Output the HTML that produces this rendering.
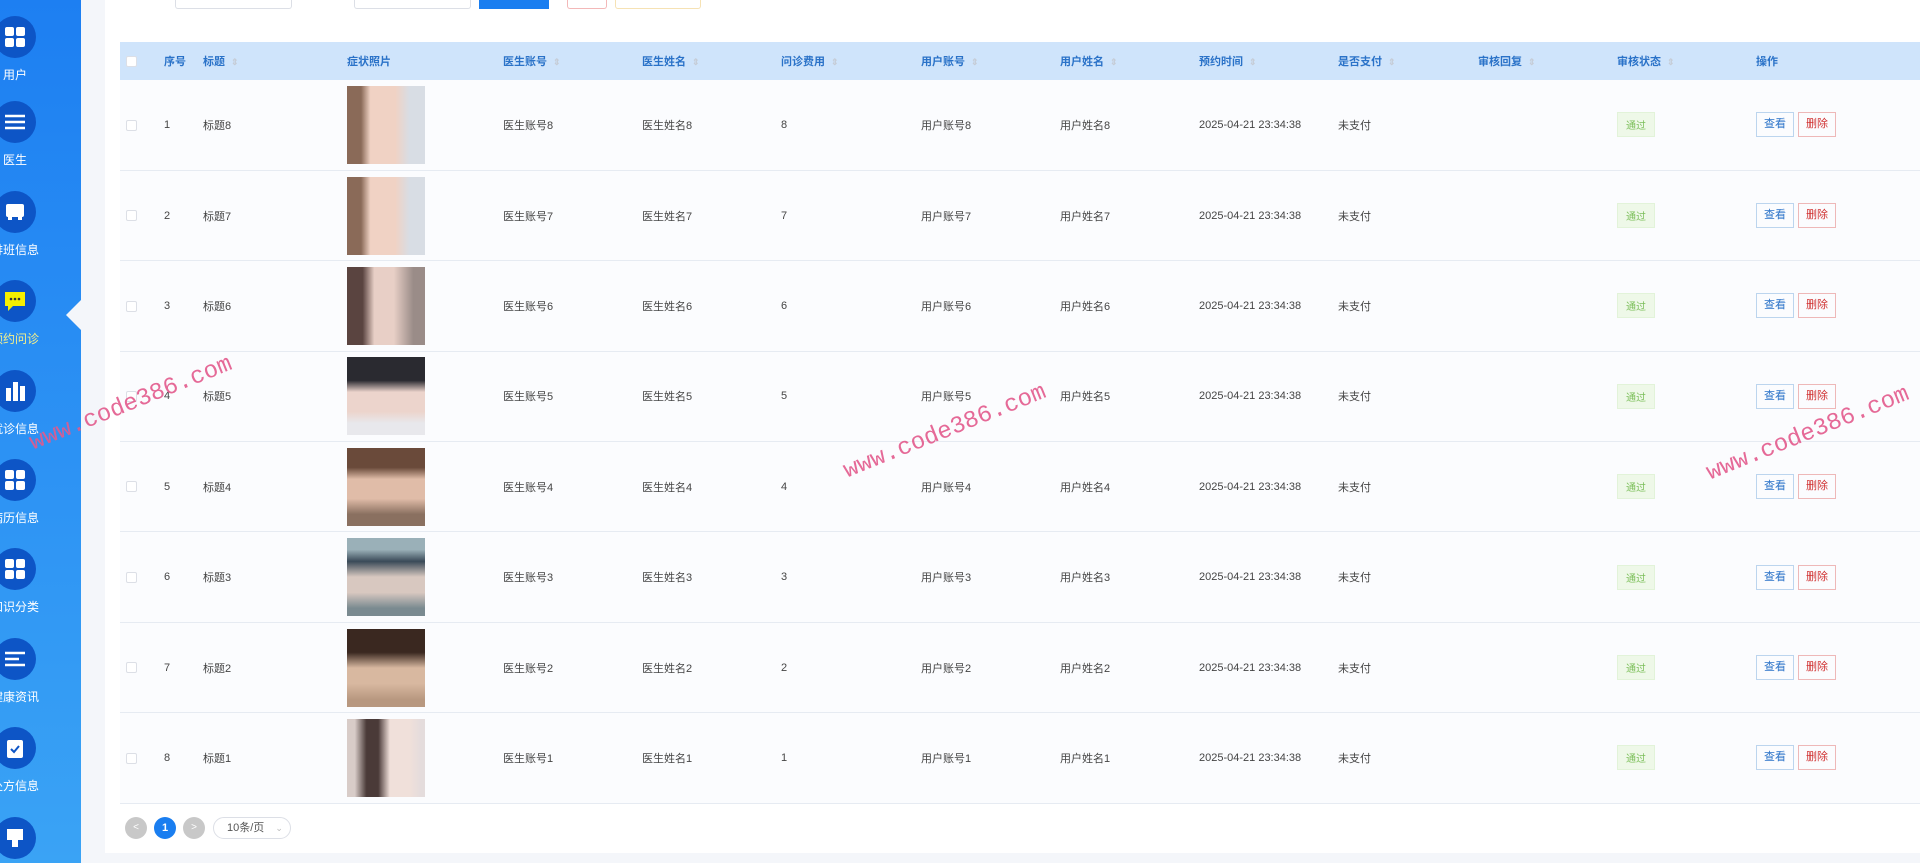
<!DOCTYPE html>
<html><head><meta charset="utf-8"><style>
*{margin:0;padding:0;box-sizing:border-box}
body{width:1920px;height:863px;overflow:hidden;background:#f4f6fa;font-family:"Liberation Sans","Noto Sans CJK SC",sans-serif;font-size:12px;color:#444;position:relative}
.side{position:absolute;left:0;top:0;width:81px;height:863px;background:linear-gradient(#1d7ff2,#3aa3f5);overflow:hidden}
.it{position:absolute;left:0;width:81px}
.ci{position:absolute;left:-6px;width:42px;height:42px;border-radius:50%;background:#0d55c6;display:flex;align-items:center;justify-content:center}
.lb{position:absolute;left:-20px;width:70px;text-align:center;color:#fff;font-size:12px;top:50px}
.notch{position:absolute;left:66px;top:300px;width:0;height:0;border-top:15px solid transparent;border-bottom:15px solid transparent;border-right:15px solid #f4f6fa}
.card{position:absolute;left:105px;top:0;width:1815px;height:853px;background:#fff}
.inp{position:absolute;top:-2px;height:11px;border:1px solid #dcdfe6;border-top:none;background:#fff;border-radius:0 0 3px 3px}
table{position:absolute;left:120px;top:42px;width:1800px;border-collapse:collapse;table-layout:fixed}
th{height:38px;background:#cfe4fb;color:#2a72c8;font-weight:bold;text-align:left;font-size:11px}
td{height:90.4px;border-bottom:1px solid #e6ebf2;background:#fbfcfe;font-size:11px;color:#444}
.cb{display:inline-block;width:11px;height:11px;border:1px solid #dcdfe6;background:#fff;border-radius:2px;vertical-align:middle}
.s{color:#c6ccd6;font-size:9px;margin-left:6px}
.img{width:78px;height:78px;display:block;margin-left:0}
.tag{display:inline-block;padding:4px 8px;background:#eef8e8;color:#7cbf5a;font-size:10px;border:1px solid #e2f3d9}
.b{display:inline-block;width:38px;height:25px;line-height:23px;text-align:center;font-size:11px;border:1px solid;margin-right:4px}
.wm{position:absolute;color:#e35a8c;font-family:"Liberation Mono",monospace;font-size:24px;transform:rotate(-22deg);transform-origin:left bottom;white-space:nowrap;opacity:.9}
</style></head><body>
<div class="side">
 <div class="it" style="top:16px"><div class="ci"><svg width="22" height="22"><rect x="1" y="1" width="9" height="9" rx="2" fill="#fff"/><rect x="12" y="1" width="9" height="9" rx="2" fill="#fff"/><rect x="1" y="12" width="9" height="9" rx="2" fill="#fff"/><rect x="12" y="12" width="9" height="9" rx="2" fill="#fff"/></svg></div><div class="lb">用户</div></div>
 <div class="it" style="top:101px"><div class="ci"><svg width="22" height="22" stroke="#fff" stroke-width="2.5"><line x1="1" y1="5" x2="21" y2="5"/><line x1="1" y1="11" x2="21" y2="11"/><line x1="1" y1="17" x2="21" y2="17"/></svg></div><div class="lb">医生</div></div>
 <div class="it" style="top:191px"><div class="ci"><svg width="22" height="22"><rect x="2" y="3" width="18" height="13" rx="2" fill="#fff"/><rect x="4" y="16" width="4" height="3" fill="#fff"/><rect x="14" y="16" width="4" height="3" fill="#fff"/></svg></div><div class="lb">排班信息</div></div>
 <div class="it" style="top:280px"><div class="ci"><svg width="24" height="22"><path d="M2 2h20v14H10l-5 5v-5H2z" fill="#f5f000"/><circle cx="8" cy="9" r="1.3" fill="#333"/><circle cx="12" cy="9" r="1.3" fill="#333"/><circle cx="16" cy="9" r="1.3" fill="#333"/></svg></div><div class="lb" style="color:#f5f08a">预约问诊</div></div>
 <div class="it" style="top:370px"><div class="ci"><svg width="22" height="22" fill="#fff"><rect x="2" y="8" width="5" height="13"/><rect x="9" y="2" width="5" height="19"/><rect x="16" y="6" width="5" height="15"/></svg></div><div class="lb">就诊信息</div></div>
 <div class="it" style="top:459px"><div class="ci"><svg width="22" height="22"><rect x="1" y="1" width="9" height="9" rx="2" fill="#fff"/><rect x="12" y="1" width="9" height="9" rx="2" fill="#fff"/><rect x="1" y="12" width="9" height="9" rx="2" fill="#fff"/><rect x="12" y="12" width="9" height="9" rx="2" fill="#fff"/></svg></div><div class="lb">病历信息</div></div>
 <div class="it" style="top:548px"><div class="ci"><svg width="22" height="22"><rect x="1" y="1" width="9" height="9" rx="2" fill="#fff"/><rect x="12" y="1" width="9" height="9" rx="2" fill="#fff"/><rect x="1" y="12" width="9" height="9" rx="2" fill="#fff"/><rect x="12" y="12" width="9" height="9" rx="2" fill="#fff"/></svg></div><div class="lb">知识分类</div></div>
 <div class="it" style="top:638px"><div class="ci"><svg width="22" height="22" stroke="#fff" stroke-width="2.5"><line x1="1" y1="5" x2="21" y2="5"/><line x1="1" y1="11" x2="15" y2="11"/><line x1="1" y1="17" x2="21" y2="17"/></svg></div><div class="lb">健康资讯</div></div>
 <div class="it" style="top:727px"><div class="ci"><svg width="22" height="22"><rect x="3" y="3" width="16" height="18" rx="2" fill="#fff"/><path d="M7 12l3 3 5-6" stroke="#0d55c6" stroke-width="2" fill="none"/></svg></div><div class="lb">处方信息</div></div>
 <div class="it" style="top:817px"><div class="ci"><svg width="22" height="22" fill="#fff"><rect x="3" y="2" width="16" height="11"/><rect x="8" y="13" width="6" height="7"/></svg></div><div class="lb">系统</div></div>
</div>
<div class="notch"></div>
<div class="card"></div>
<div class="inp" style="left:175px;width:117px"></div>
<div class="inp" style="left:354px;width:117px"></div>
<div style="position:absolute;left:479px;top:0;width:70px;height:9px;background:#1a7ef0"></div>
<div class="inp" style="left:567px;width:40px;border-color:#f3b8b8"></div>
<div class="inp" style="left:615px;width:86px;border-color:#f6e2b4"></div>
<table>
<colgroup><col style="width:44px"><col style="width:39px"><col style="width:144px"><col style="width:156px"><col style="width:139px"><col style="width:139px"><col style="width:140px"><col style="width:139px"><col style="width:139px"><col style="width:139px"><col style="width:140px"><col style="width:139px"><col style="width:139px"><col></colgroup>
<tr><th style="padding-left:6px"><span class="cb"></span></th><th>序号</th><th>标题<span class="s">⇕</span></th><th>症状照片</th><th>医生账号<span class="s">⇕</span></th><th>医生姓名<span class="s">⇕</span></th><th>问诊费用<span class="s">⇕</span></th><th>用户账号<span class="s">⇕</span></th><th>用户姓名<span class="s">⇕</span></th><th>预约时间<span class="s">⇕</span></th><th>是否支付<span class="s">⇕</span></th><th>审核回复<span class="s">⇕</span></th><th>审核状态<span class="s">⇕</span></th><th>操作</th></tr>
<tr><td style="padding-left:6px"><span class="cb"></span></td><td>1</td><td>标题8</td><td><div class="img" style="background:linear-gradient(90deg,#8a6a58 0 18%,#f0d2c4 30% 62%,#d8dde4 80%)"></div></td><td>医生账号8</td><td>医生姓名8</td><td>8</td><td>用户账号8</td><td>用户姓名8</td><td>2025-04-21 23:34:38</td><td>未支付</td><td></td><td><span class="tag">通过</span></td><td><span class="b" style="color:#2a72c8;border-color:#bcd5ee">查看</span><span class="b" style="color:#d03030;border-color:#eeb8b8">删除</span></td></tr>
<tr><td style="padding-left:6px"><span class="cb"></span></td><td>2</td><td>标题7</td><td><div class="img" style="background:linear-gradient(90deg,#8a6a58 0 18%,#f0d2c4 30% 62%,#d8dde4 80%)"></div></td><td>医生账号7</td><td>医生姓名7</td><td>7</td><td>用户账号7</td><td>用户姓名7</td><td>2025-04-21 23:34:38</td><td>未支付</td><td></td><td><span class="tag">通过</span></td><td><span class="b" style="color:#2a72c8;border-color:#bcd5ee">查看</span><span class="b" style="color:#d03030;border-color:#eeb8b8">删除</span></td></tr>
<tr><td style="padding-left:6px"><span class="cb"></span></td><td>3</td><td>标题6</td><td><div class="img" style="background:linear-gradient(90deg,#5a4440 0 20%,#e8cfc6 35% 60%,#9a8c88 85%)"></div></td><td>医生账号6</td><td>医生姓名6</td><td>6</td><td>用户账号6</td><td>用户姓名6</td><td>2025-04-21 23:34:38</td><td>未支付</td><td></td><td><span class="tag">通过</span></td><td><span class="b" style="color:#2a72c8;border-color:#bcd5ee">查看</span><span class="b" style="color:#d03030;border-color:#eeb8b8">删除</span></td></tr>
<tr><td style="padding-left:6px"><span class="cb"></span></td><td>4</td><td>标题5</td><td><div class="img" style="background:linear-gradient(180deg,#2a2a30 0 30%,#ecd4cc 45% 70%,#e8e8ec 85%)"></div></td><td>医生账号5</td><td>医生姓名5</td><td>5</td><td>用户账号5</td><td>用户姓名5</td><td>2025-04-21 23:34:38</td><td>未支付</td><td></td><td><span class="tag">通过</span></td><td><span class="b" style="color:#2a72c8;border-color:#bcd5ee">查看</span><span class="b" style="color:#d03030;border-color:#eeb8b8">删除</span></td></tr>
<tr><td style="padding-left:6px"><span class="cb"></span></td><td>5</td><td>标题4</td><td><div class="img" style="background:linear-gradient(180deg,#6a4a3a 0 25%,#e0bca8 40% 65%,#8a7060 85%)"></div></td><td>医生账号4</td><td>医生姓名4</td><td>4</td><td>用户账号4</td><td>用户姓名4</td><td>2025-04-21 23:34:38</td><td>未支付</td><td></td><td><span class="tag">通过</span></td><td><span class="b" style="color:#2a72c8;border-color:#bcd5ee">查看</span><span class="b" style="color:#d03030;border-color:#eeb8b8">删除</span></td></tr>
<tr><td style="padding-left:6px"><span class="cb"></span></td><td>6</td><td>标题3</td><td><div class="img" style="background:linear-gradient(180deg,#9ab0b8 0 15%,#3a4a58 30%,#d8c8c0 50% 70%,#7a8a90 90%)"></div></td><td>医生账号3</td><td>医生姓名3</td><td>3</td><td>用户账号3</td><td>用户姓名3</td><td>2025-04-21 23:34:38</td><td>未支付</td><td></td><td><span class="tag">通过</span></td><td><span class="b" style="color:#2a72c8;border-color:#bcd5ee">查看</span><span class="b" style="color:#d03030;border-color:#eeb8b8">删除</span></td></tr>
<tr><td style="padding-left:6px"><span class="cb"></span></td><td>7</td><td>标题2</td><td><div class="img" style="background:linear-gradient(180deg,#3a2820 0 30%,#d8b8a0 50% 70%,#b89880 90%)"></div></td><td>医生账号2</td><td>医生姓名2</td><td>2</td><td>用户账号2</td><td>用户姓名2</td><td>2025-04-21 23:34:38</td><td>未支付</td><td></td><td><span class="tag">通过</span></td><td><span class="b" style="color:#2a72c8;border-color:#bcd5ee">查看</span><span class="b" style="color:#d03030;border-color:#eeb8b8">删除</span></td></tr>
<tr><td style="padding-left:6px"><span class="cb"></span></td><td>8</td><td>标题1</td><td><div class="img" style="background:linear-gradient(90deg,#d8ccc8 0 10%,#4a3a38 25% 40%,#f0e0da 55% 80%,#e4dcdc 95%)"></div></td><td>医生账号1</td><td>医生姓名1</td><td>1</td><td>用户账号1</td><td>用户姓名1</td><td>2025-04-21 23:34:38</td><td>未支付</td><td></td><td><span class="tag">通过</span></td><td><span class="b" style="color:#2a72c8;border-color:#bcd5ee">查看</span><span class="b" style="color:#d03030;border-color:#eeb8b8">删除</span></td></tr>
</table>
<div style="position:absolute;left:125px;top:817px;width:22px;height:22px;border-radius:50%;background:#c8c8c8;color:#fff;text-align:center;line-height:22px;font-size:10px">&lt;</div>
<div style="position:absolute;left:154px;top:817px;width:22px;height:22px;border-radius:50%;background:#1a7ef0;color:#fff;text-align:center;line-height:22px;font-size:11px;font-weight:bold">1</div>
<div style="position:absolute;left:183px;top:817px;width:22px;height:22px;border-radius:50%;background:#c8c8c8;color:#fff;text-align:center;line-height:22px;font-size:10px">&gt;</div>
<div style="position:absolute;left:213px;top:817px;width:78px;height:22px;border-radius:11px;border:1px solid #dcdfe6;line-height:20px;padding-left:13px;font-size:11px;color:#555">10条/页 <span style="color:#bbb;margin-left:8px;font-size:9px">⌄</span></div>
<div class="wm" style="left:36px;top:430px">www.code386.com</div>
<div class="wm" style="left:850px;top:458px">www.code386.com</div>
<div class="wm" style="left:1713px;top:460px">www.code386.com</div>
</body></html>
